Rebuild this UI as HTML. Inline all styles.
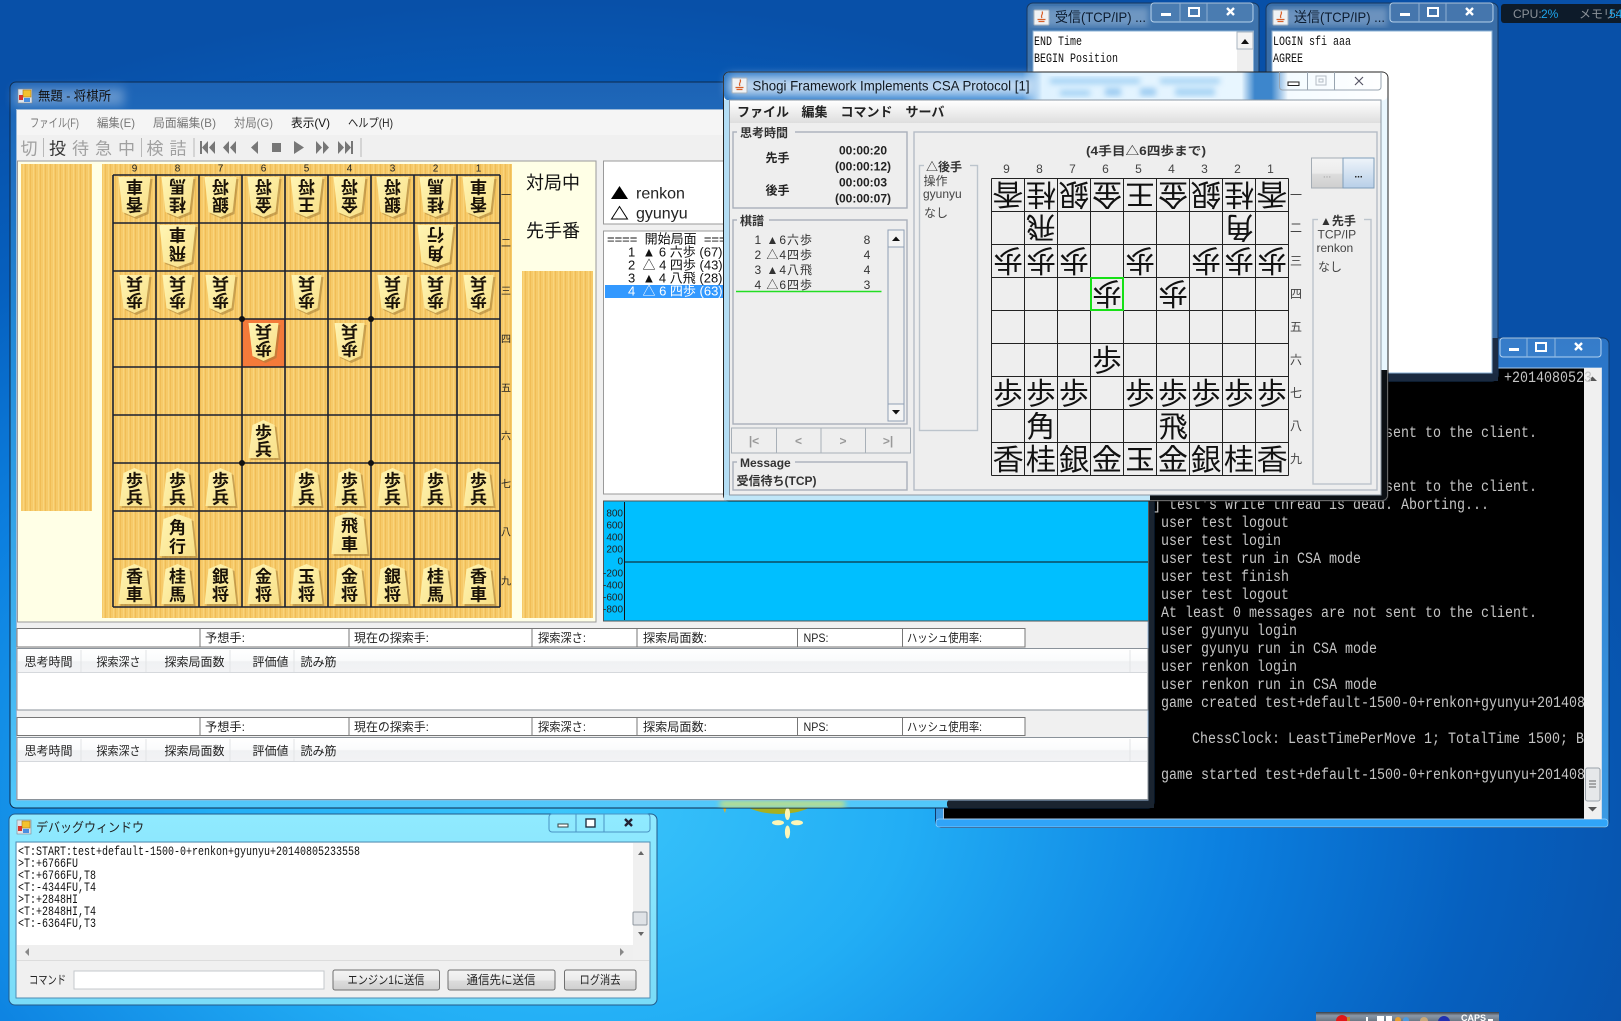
<!DOCTYPE html>
<html lang="ja"><head><meta charset="utf-8"><title>将棋所</title>
<style>
html,body{margin:0;padding:0;width:1621px;height:1021px;overflow:hidden;background:radial-gradient(ellipse 1150px 800px at 560px 800px,#3cc6fb 0%,#22aef5 30%,#0c80e0 58%,#0660bf 80%,#0850a8 100%)}
svg{position:absolute;left:0;top:0}
text{font-family:"Liberation Sans","Noto Sans CJK JP",sans-serif;font-size:12px;fill:#222;dominant-baseline:central;white-space:pre}
.k{font-family:"Noto Sans CJK JP",sans-serif;font-size:17px;font-weight:700;text-anchor:middle;fill:#1a1208}
.c{font-family:"IPAGothic","Noto Sans CJK JP",sans-serif;font-size:31px;text-anchor:middle;fill:#111}
.m{text-anchor:middle}
.con{font-family:"Liberation Mono",monospace;font-size:15.5px;fill:#c4c4c4}
.mono{font-family:"Liberation Mono",monospace;font-size:12.5px;fill:#111}
.g{fill:#666}
.tb{font-family:"Noto Sans CJK JP",sans-serif;font-size:17px;text-anchor:middle;fill:#a0a0a0}
.lb{font-size:10px;text-anchor:end;fill:#222}
.sep{stroke:#b4b8bc;stroke-width:1}
.win{stroke:#0d2a4c;stroke-width:1}
.ctl{fill:rgba(255,255,255,.06);stroke:rgba(220,240,255,.75);stroke-width:1}
.hd{fill:#888;stroke:#a8aeb8}
.fs{fill:none;stroke:#a9b0ba;stroke-width:1.4}
.leg{font-weight:700;font-size:12px;fill:#333}
</style></head><body>
<svg width="1621" height="1021" viewBox="0 0 1621 1021" xmlns="http://www.w3.org/2000/svg">
<defs>
<pattern id="wood" width="5" height="10" patternUnits="userSpaceOnUse"><rect width="5" height="10" fill="#f6ca69"/><rect x="0" width="1" height="10" fill="#f0bd57"/><rect x="3" width="1" height="10" fill="#f9d47c"/></pattern>
<linearGradient id="pf" x1="0" y1="0" x2="1" y2="1"><stop offset="0" stop-color="#fff5b4"/><stop offset="1" stop-color="#f8df86"/></linearGradient>
<linearGradient id="mainf" x1="0" y1="0" x2="0" y2="1"><stop offset="0" stop-color="#1d63b5"/><stop offset=".4" stop-color="#2490dc"/><stop offset="1" stop-color="#52c8fb"/></linearGradient>
<linearGradient id="dbg" x1="0" y1="0" x2="0" y2="1"><stop offset="0" stop-color="#90eaff"/><stop offset="1" stop-color="#7adcf8"/></linearGradient>
<linearGradient id="csat" x1="0" y1="0" x2="1" y2="0"><stop offset="0" stop-color="#1f70c4"/><stop offset=".45" stop-color="#2f83d4"/><stop offset=".48" stop-color="#dff2ff"/><stop offset=".78" stop-color="#e8f6ff"/><stop offset=".8" stop-color="#3d86cc"/><stop offset=".825" stop-color="#3d86cc"/><stop offset=".85" stop-color="#f4fbff"/><stop offset="1" stop-color="#fff"/></linearGradient>
<linearGradient id="hdr" x1="0" y1="0" x2="0" y2="1"><stop offset="0" stop-color="#fff"/><stop offset=".5" stop-color="#fafbfc"/><stop offset=".55" stop-color="#f0f1f3"/><stop offset="1" stop-color="#f2f3f5"/></linearGradient>
<linearGradient id="btn" x1="0" y1="0" x2="0" y2="1"><stop offset="0" stop-color="#f4f4f4"/><stop offset=".5" stop-color="#ebebeb"/><stop offset=".55" stop-color="#dcdcdc"/><stop offset="1" stop-color="#cfcfcf"/></linearGradient>
<linearGradient id="bluebtn" x1="0" y1="0" x2="0" y2="1"><stop offset="0" stop-color="#eef4fa"/><stop offset="1" stop-color="#b8cfe8"/></linearGradient>
<linearGradient id="menug" x1="0" y1="0" x2="0" y2="1"><stop offset="0" stop-color="#fff"/><stop offset="1" stop-color="#dedede"/></linearGradient>
<linearGradient id="task" x1="0" y1="0" x2="0" y2="1"><stop offset="0" stop-color="#3a4048"/><stop offset=".4" stop-color="#8a98a8"/><stop offset="1" stop-color="#6c7884"/></linearGradient>
<linearGradient id="cons" x1="0" y1="0" x2="0" y2="1"><stop offset="0" stop-color="#2a74c6"/><stop offset="1" stop-color="#3c9be4"/></linearGradient>
<filter id="bl"><feGaussianBlur stdDeviation="3"/></filter>
<filter id="bl2" x="-20%" y="-100%" width="140%" height="300%"><feGaussianBlur stdDeviation="5"/></filter>
<g id="sa"><path d="M2-17L13-12L17 21H-13L-9-12Z" fill="#a07c38" opacity=".55"/><path d="M0-19L11-14L15 19H-15L-11-14Z" fill="url(#pf)"/></g>
<g id="sb"><path d="M2-18L14-13L18 22H-14L-10-13Z" fill="#a07c38" opacity=".55"/><path d="M0-20L12-15L16 20H-16L-12-15Z" fill="url(#pf)"/></g>
<g id="sc"><path d="M2-19L16-14L20 23H-16L-12-14Z" fill="#a07c38" opacity=".55"/><path d="M0-21L14-16L18 21H-18L-14-16Z" fill="url(#pf)"/></g>
<g id="ga"><path d="M2 21L13 16L17-17H-13L-9 16Z" fill="#a07c38" opacity=".55"/><path d="M0 19L11 14L15-19H-15L-11 14Z" fill="url(#pf)"/></g>
<g id="gb"><path d="M2 22L14 17L18-18H-14L-10 17Z" fill="#a07c38" opacity=".55"/><path d="M0 20L12 15L16-20H-16L-12 15Z" fill="url(#pf)"/></g>
<g id="gc"><path d="M2 23L16 18L20-19H-16L-12 18Z" fill="#a07c38" opacity=".55"/><path d="M0 21L14 16L18-21H-18L-14 16Z" fill="url(#pf)"/></g>
<g id="java"><rect width="15" height="15" rx="1" fill="#f0f2f4" stroke="#aab4be"/><path d="M8 1.5C10 4 6 5 8 8M3.5 9.5H11.5M4.5 11.5H10.5" stroke="#d8602a" fill="none" stroke-width="1.2"/></g>
<g id="fico"><rect width="14" height="14" fill="#dfe4ea" stroke="#7b8792" stroke-width=".6"/><rect x="5" y="1" width="8" height="7" fill="#f4c22e" stroke="#a8781a" stroke-width=".6"/><rect x="1" y="6" width="4" height="5" fill="#d8342a"/><rect x="6" y="9" width="6" height="4" fill="#4a8ee0"/></g>
</defs>

<!-- wallpaper details -->
<ellipse cx="779" cy="795" rx="41" ry="19" fill="#a8b020"/>
<path d="M722 806h5l-2 7z" fill="#d8b030"/>
<ellipse cx="787.5" cy="814" rx="2.6" ry="6" fill="#fdf6b8"/><ellipse cx="787.5" cy="832" rx="2.6" ry="6.5" fill="#fdf6b8"/><ellipse cx="778" cy="822.7" rx="6" ry="2.6" fill="#fdf6b8"/><ellipse cx="797" cy="822.7" rx="6" ry="2.6" fill="#fdf6b8"/>

<!-- CPU widget -->
<rect x="1501" y="4" width="125" height="19" rx="3" fill="#0d1b2a"/>
<text x="1513" y="14" fill="#8b9198" style="fill:#8b9198">CPU:</text><text x="1541" y="14" style="fill:#1ea5ec">2%</text><text x="1579" y="14" style="fill:#8b9198">メモリ:</text><text x="1609" y="14" style="fill:#1ea5ec">54</text>

<!-- taskbar fragment -->
<rect x="1316" y="1012" width="183" height="9" fill="url(#task)"/>
<circle cx="1342" cy="1021" r="6" fill="#e01818"/><rect x="1347" y="1017" width="3" height="4" fill="#c08830"/>
<rect x="1366" y="1017" width="2" height="4" fill="#fff"/><rect x="1377" y="1016" width="7" height="5" fill="#fff"/><rect x="1386" y="1016" width="6" height="5" fill="#fff"/>
<circle cx="1398" cy="1020" r="3" fill="#e8a030"/><circle cx="1406" cy="1020" r="3" fill="#4a9ae0"/><circle cx="1424" cy="1021" r="4" fill="#c8a878"/><circle cx="1444" cy="1022" r="6" fill="#2030b0"/>
<text x="1461" y="1018" style="font-size:9px;fill:#fff;font-weight:700">CAPS</text><rect x="1488" y="1019" width="5" height="2" fill="#fff"/>

<!-- console window -->
<rect x="935.5" y="338" width="673.5" height="489.5" rx="6" fill="url(#cons)" stroke="#123a6a"/>
<rect x="936" y="819" width="672" height="8" rx="3" fill="#30a4f8" stroke="#8fd0ff" stroke-width=".8"/>
<rect x="943.5" y="368" width="658" height="451" fill="#000" stroke="#a8c8e8"/>
<rect x="1584" y="368" width="17.5" height="451" fill="#f0f0f0"/>
<path d="M1588 381h9l-4.5-4.5z" fill="#555"/><path d="M1588 807h9l-4.5 4.5z" fill="#555"/>
<rect x="1585.5" y="768" width="14.5" height="33" rx="2" fill="#e6e8ea" stroke="#9aa2aa"/><path d="M1589 781h7M1589 784h7M1589 787h7" stroke="#666"/>
<rect x="1500" y="338" width="101" height="19" rx="3" class="ctl"/><path d="M1527 338v19M1555 338v19" stroke="#8fb8e0"/>
<rect x="1509" y="348" width="10" height="3" fill="#fff"/><rect x="1536" y="343" width="10" height="8" fill="none" stroke="#fff" stroke-width="2"/><path d="M1575 343l7 7M1582 343l-7 7" stroke="#fff" stroke-width="2.4"/>
<g>
<text class="con" x="1504" y="378" textLength="88" lengthAdjust="spacingAndGlyphs">+2014080523</text>
<text class="con" x="1161" y="433" textLength="376" lengthAdjust="spacingAndGlyphs">At least 0 messages are not sent to the client.</text>
<text class="con" x="1161" y="487" textLength="376" lengthAdjust="spacingAndGlyphs">At least 0 messages are not sent to the client.</text>
<text class="con" x="1153" y="505" textLength="336" lengthAdjust="spacingAndGlyphs">] test's write thread is dead. Aborting...</text>
<text class="con" x="1161" y="523" textLength="128" lengthAdjust="spacingAndGlyphs">user test logout</text>
<text class="con" x="1161" y="541" textLength="120" lengthAdjust="spacingAndGlyphs">user test login</text>
<text class="con" x="1161" y="559" textLength="200" lengthAdjust="spacingAndGlyphs">user test run in CSA mode</text>
<text class="con" x="1161" y="577" textLength="128" lengthAdjust="spacingAndGlyphs">user test finish</text>
<text class="con" x="1161" y="595" textLength="128" lengthAdjust="spacingAndGlyphs">user test logout</text>
<text class="con" x="1161" y="613" textLength="376" lengthAdjust="spacingAndGlyphs">At least 0 messages are not sent to the client.</text>
<text class="con" x="1161" y="631" textLength="136" lengthAdjust="spacingAndGlyphs">user gyunyu login</text>
<text class="con" x="1161" y="649" textLength="216" lengthAdjust="spacingAndGlyphs">user gyunyu run in CSA mode</text>
<text class="con" x="1161" y="667" textLength="136" lengthAdjust="spacingAndGlyphs">user renkon login</text>
<text class="con" x="1161" y="685" textLength="216" lengthAdjust="spacingAndGlyphs">user renkon run in CSA mode</text>
<text class="con" x="1161" y="703" textLength="424" lengthAdjust="spacingAndGlyphs">game created test+default-1500-0+renkon+gyunyu+201408</text>
<text class="con" x="1192" y="739" textLength="392" lengthAdjust="spacingAndGlyphs">ChessClock: LeastTimePerMove 1; TotalTime 1500; B</text>
<text class="con" x="1161" y="775" textLength="424" lengthAdjust="spacingAndGlyphs">game started test+default-1500-0+renkon+gyunyu+201408</text>
</g>

<!-- recv window -->
<rect x="1027" y="3" width="232" height="100" rx="6" fill="#3f74ad" stroke="#17375e"/>
<rect x="1032" y="8" width="116" height="18" fill="#fff" opacity=".25" filter="url(#bl)"/>
<use href="#java" x="1034" y="10"/>
<text x="1055" y="17" style="font-size:14px;fill:#0c1c30" textLength="91" lengthAdjust="spacingAndGlyphs">受信(TCP/IP) ...</text>
<rect x="1151" y="3" width="102" height="19" rx="3" class="ctl"/><path d="M1180 3v19M1207 3v19" stroke="#8fb0d4"/>
<rect x="1161" y="13" width="10" height="3" fill="#fff"/><rect x="1189" y="8" width="10" height="8" fill="none" stroke="#fff" stroke-width="2"/><path d="M1227 8l7 7M1234 8l-7 7" stroke="#fff" stroke-width="2.4"/>
<rect x="1033" y="31" width="220.5" height="70" fill="#fff" stroke="#8ab0d4"/>
<rect x="1237" y="32" width="16" height="70" fill="#eee"/><rect x="1237" y="32" width="16" height="17" fill="#f4f4f4" stroke="#a8b4c0"/><path d="M1241 44h8l-4-5z" fill="#111"/>
<text class="mono" x="1034" y="42" textLength="48" lengthAdjust="spacingAndGlyphs">END Time</text><text class="mono" x="1034" y="59" textLength="84" lengthAdjust="spacingAndGlyphs">BEGIN Position</text>

<!-- send window -->
<rect x="1266" y="3" width="232" height="378" rx="6" fill="#3a6ea8" stroke="#17375e"/>
<rect x="1486" y="338" width="12" height="43" fill="#1c2c44"/><rect x="1266" y="373" width="232" height="8" rx="3" fill="#1a2a40"/>
<rect x="1271" y="8" width="116" height="18" fill="#fff" opacity=".25" filter="url(#bl)"/>
<use href="#java" x="1273" y="10"/>
<text x="1294" y="17" style="font-size:14px;fill:#0c1c30" textLength="91" lengthAdjust="spacingAndGlyphs">送信(TCP/IP) ...</text>
<rect x="1390" y="3" width="103" height="19" rx="3" class="ctl"/><path d="M1419 3v19M1446 3v19" stroke="#8fb0d4"/>
<rect x="1400" y="13" width="10" height="3" fill="#fff"/><rect x="1428" y="8" width="10" height="8" fill="none" stroke="#fff" stroke-width="2"/><path d="M1466 8l7 7M1473 8l-7 7" stroke="#fff" stroke-width="2.4"/>
<rect x="1272" y="31" width="220" height="342" fill="#fff" stroke="#8ab0d4"/>
<text class="mono" x="1273" y="42" textLength="78" lengthAdjust="spacingAndGlyphs">LOGIN sfi aaa</text><text class="mono" x="1273" y="59" textLength="30" lengthAdjust="spacingAndGlyphs">AGREE</text>

<!-- main window -->
<rect x="10" y="82" width="1144" height="726" rx="6" fill="url(#mainf)" stroke="#0d2a4c"/>
<rect x="1148" y="470" width="6" height="338" fill="#1a2430"/><rect x="947" y="800" width="207" height="8" rx="3" fill="#1a2430"/>
<rect x="720" y="801" width="125" height="6" fill="#e8e860" opacity=".85" filter="url(#bl)"/>
<rect x="14" y="88" width="110" height="18" fill="#fff" opacity=".3" filter="url(#bl2)"/>
<use href="#fico" x="18" y="89"/>
<text x="38" y="96" style="font-size:13px;fill:#101010" textLength="73" lengthAdjust="spacingAndGlyphs">無題 - 将棋所</text>
<rect x="16.5" y="109.5" width="1131.5" height="690.5" fill="#f0f0f0" stroke="#9ab8d8"/>
<rect x="17" y="110" width="1131" height="25" fill="#f5f5f5"/>
<g class="g">
<text x="30" y="123" style="fill:#777" textLength="49" lengthAdjust="spacingAndGlyphs">ファイル(F)</text><text x="97" y="123" style="fill:#777" textLength="38" lengthAdjust="spacingAndGlyphs">編集(E)</text><text x="153" y="123" style="fill:#777" textLength="63" lengthAdjust="spacingAndGlyphs">局面編集(B)</text><text x="234" y="123" style="fill:#777" textLength="39" lengthAdjust="spacingAndGlyphs">対局(G)</text><text x="291" y="123" style="fill:#111" textLength="39" lengthAdjust="spacingAndGlyphs">表示(V)</text><text x="348" y="123" style="fill:#222" textLength="45" lengthAdjust="spacingAndGlyphs">ヘルプ(H)</text>
</g>
<text class="tb" x="29" y="147">切</text><path d="M43.5 138v19M141.5 138v19M194 138v19M361 138v19" stroke="#b8b8b8"/>
<text class="tb" x="57.5" y="147" style="fill:#333">投</text><text class="tb" x="80.5" y="147">待</text><text class="tb" x="103.5" y="147">急</text><text class="tb" x="126.5" y="147">中</text><text class="tb" x="155" y="147">検</text><text class="tb" x="178" y="147">詰</text>
<g fill="#777"><rect x="200" y="141" width="2" height="13"/><path d="M208 141v13l-6-6.5zM215 141v13l-6-6.5z"/><path d="M229 141v13l-6-6.5zM236 141v13l-6-6.5z"/><path d="M258 141v13l-7-6.5z"/><rect x="272" y="143" width="9" height="9"/><path d="M294 141v13l10-6.5z"/><path d="M316 141v13l6-6.5zM323 141v13l6-6.5z"/><path d="M338 141v13l6-6.5zM345 141v13l6-6.5z"/><rect x="351" y="141" width="2" height="13"/></g>

<!-- board panel -->
<rect x="17.5" y="161" width="578.5" height="461" fill="#ffffe6" stroke="#9a9a9a"/>
<rect x="21" y="164" width="71" height="347" fill="url(#wood)"/>
<rect x="102" y="164" width="410" height="454" fill="url(#wood)"/>
<rect x="522" y="271" width="71" height="347" fill="url(#wood)"/>
<text x="526" y="183" style="font-size:18px;fill:#111">対局中</text><text x="526" y="231" style="font-size:18px;fill:#111">先手番</text>
<rect x="242.5" y="319" width="43" height="48" fill="#f47a3a"/>
<path d="M113 175V607M156 175V607M199 175V607M242 175V607M285 175V607M328 175V607M371 175V607M414 175V607M457 175V607M500 175V607M113 175H500M113 223H500M113 271H500M113 319H500M113 367H500M113 415H500M113 463H500M113 511H500M113 559H500M113 607H500" stroke="#1a2030" stroke-width="1.6" fill="none"/>
<circle cx="242" cy="319" r="3" fill="#111"/><circle cx="371" cy="319" r="3" fill="#111"/><circle cx="242" cy="463" r="3" fill="#111"/><circle cx="371" cy="463" r="3" fill="#111"/>
<g style="font-size:10px">
<text class="m" x="134.5" y="169" style="font-size:10px">9</text><text class="m" x="177.5" y="169" style="font-size:10px">8</text><text class="m" x="220.5" y="169" style="font-size:10px">7</text><text class="m" x="263.5" y="169" style="font-size:10px">6</text><text class="m" x="306.5" y="169" style="font-size:10px">5</text><text class="m" x="349.5" y="169" style="font-size:10px">4</text><text class="m" x="392.5" y="169" style="font-size:10px">3</text><text class="m" x="435.5" y="169" style="font-size:10px">2</text><text class="m" x="478.5" y="169" style="font-size:10px">1</text>
<text class="m" x="506" y="196" style="font-size:10px">一</text><text class="m" x="506" y="244" style="font-size:10px">二</text><text class="m" x="506" y="292" style="font-size:10px">三</text><text class="m" x="506" y="340" style="font-size:10px">四</text><text class="m" x="506" y="389" style="font-size:10px">五</text><text class="m" x="506" y="437" style="font-size:10px">六</text><text class="m" x="506" y="485" style="font-size:10px">七</text><text class="m" x="506" y="533" style="font-size:10px">八</text><text class="m" x="506" y="582" style="font-size:10px">九</text>
</g>
<!-- gote pieces -->
<g transform="translate(134.5,197)"><use href="#gb"/><g transform="rotate(180)"><text class="k" y="-9">香</text><text class="k" y="9">車</text></g></g>
<g transform="translate(177.5,197)"><use href="#gb"/><g transform="rotate(180)"><text class="k" y="-9">桂</text><text class="k" y="9">馬</text></g></g>
<g transform="translate(220.5,197)"><use href="#gb"/><g transform="rotate(180)"><text class="k" y="-9">銀</text><text class="k" y="9">将</text></g></g>
<g transform="translate(263.5,197)"><use href="#gb"/><g transform="rotate(180)"><text class="k" y="-9">金</text><text class="k" y="9">将</text></g></g>
<g transform="translate(306.5,197)"><use href="#gb"/><g transform="rotate(180)"><text class="k" y="-9">王</text><text class="k" y="9">将</text></g></g>
<g transform="translate(349.5,197)"><use href="#gb"/><g transform="rotate(180)"><text class="k" y="-9">金</text><text class="k" y="9">将</text></g></g>
<g transform="translate(392.5,197)"><use href="#gb"/><g transform="rotate(180)"><text class="k" y="-9">銀</text><text class="k" y="9">将</text></g></g>
<g transform="translate(435.5,197)"><use href="#gb"/><g transform="rotate(180)"><text class="k" y="-9">桂</text><text class="k" y="9">馬</text></g></g>
<g transform="translate(478.5,197)"><use href="#gb"/><g transform="rotate(180)"><text class="k" y="-9">香</text><text class="k" y="9">車</text></g></g>
<g transform="translate(177.5,246)"><use href="#gc"/><g transform="rotate(180)"><text class="k" y="-9">飛</text><text class="k" y="10">車</text></g></g>
<g transform="translate(435.5,246)"><use href="#gc"/><g transform="rotate(180)"><text class="k" y="-9">角</text><text class="k" y="10">行</text></g></g>
<g transform="translate(134.5,294)"><use href="#ga"/><g transform="rotate(180)"><text class="k" y="-8">歩</text><text class="k" y="9">兵</text></g></g>
<g transform="translate(177.5,294)"><use href="#ga"/><g transform="rotate(180)"><text class="k" y="-8">歩</text><text class="k" y="9">兵</text></g></g>
<g transform="translate(220.5,294)"><use href="#ga"/><g transform="rotate(180)"><text class="k" y="-8">歩</text><text class="k" y="9">兵</text></g></g>
<g transform="translate(306.5,294)"><use href="#ga"/><g transform="rotate(180)"><text class="k" y="-8">歩</text><text class="k" y="9">兵</text></g></g>
<g transform="translate(392.5,294)"><use href="#ga"/><g transform="rotate(180)"><text class="k" y="-8">歩</text><text class="k" y="9">兵</text></g></g>
<g transform="translate(435.5,294)"><use href="#ga"/><g transform="rotate(180)"><text class="k" y="-8">歩</text><text class="k" y="9">兵</text></g></g>
<g transform="translate(478.5,294)"><use href="#ga"/><g transform="rotate(180)"><text class="k" y="-8">歩</text><text class="k" y="9">兵</text></g></g>
<g transform="translate(263.5,342)"><use href="#ga"/><g transform="rotate(180)"><text class="k" y="-8">歩</text><text class="k" y="9">兵</text></g></g>
<g transform="translate(349.5,342)"><use href="#ga"/><g transform="rotate(180)"><text class="k" y="-8">歩</text><text class="k" y="9">兵</text></g></g>
<!-- sente pieces -->
<g transform="translate(263.5,439)"><use href="#sa"/><text class="k" y="-8">歩</text><text class="k" y="9">兵</text></g>
<g transform="translate(134.5,487)"><use href="#sa"/><text class="k" y="-8">歩</text><text class="k" y="9">兵</text></g>
<g transform="translate(177.5,487)"><use href="#sa"/><text class="k" y="-8">歩</text><text class="k" y="9">兵</text></g>
<g transform="translate(220.5,487)"><use href="#sa"/><text class="k" y="-8">歩</text><text class="k" y="9">兵</text></g>
<g transform="translate(306.5,487)"><use href="#sa"/><text class="k" y="-8">歩</text><text class="k" y="9">兵</text></g>
<g transform="translate(349.5,487)"><use href="#sa"/><text class="k" y="-8">歩</text><text class="k" y="9">兵</text></g>
<g transform="translate(392.5,487)"><use href="#sa"/><text class="k" y="-8">歩</text><text class="k" y="9">兵</text></g>
<g transform="translate(435.5,487)"><use href="#sa"/><text class="k" y="-8">歩</text><text class="k" y="9">兵</text></g>
<g transform="translate(478.5,487)"><use href="#sa"/><text class="k" y="-8">歩</text><text class="k" y="9">兵</text></g>
<g transform="translate(177.5,535)"><use href="#sc"/><text class="k" y="-9">角</text><text class="k" y="10">行</text></g>
<g transform="translate(349.5,533)"><use href="#sc"/><text class="k" y="-9">飛</text><text class="k" y="10">車</text></g>
<g transform="translate(134.5,584)"><use href="#sb"/><text class="k" y="-9">香</text><text class="k" y="9">車</text></g>
<g transform="translate(177.5,584)"><use href="#sb"/><text class="k" y="-9">桂</text><text class="k" y="9">馬</text></g>
<g transform="translate(220.5,584)"><use href="#sb"/><text class="k" y="-9">銀</text><text class="k" y="9">将</text></g>
<g transform="translate(263.5,584)"><use href="#sb"/><text class="k" y="-9">金</text><text class="k" y="9">将</text></g>
<g transform="translate(306.5,584)"><use href="#sb"/><text class="k" y="-9">玉</text><text class="k" y="9">将</text></g>
<g transform="translate(349.5,584)"><use href="#sb"/><text class="k" y="-9">金</text><text class="k" y="9">将</text></g>
<g transform="translate(392.5,584)"><use href="#sb"/><text class="k" y="-9">銀</text><text class="k" y="9">将</text></g>
<g transform="translate(435.5,584)"><use href="#sb"/><text class="k" y="-9">桂</text><text class="k" y="9">馬</text></g>
<g transform="translate(478.5,584)"><use href="#sb"/><text class="k" y="-9">香</text><text class="k" y="9">車</text></g>

<!-- names -->
<rect x="603.5" y="161" width="545" height="63" fill="#fff" stroke="#9a9a9a"/>
<path d="M611 199L619.5 186L628 199Z" fill="#000"/><path d="M611.5 219L619.5 206.5L627.5 219Z" fill="#fff" stroke="#000"/>
<text x="636" y="194" style="font-size:16px;fill:#222">renkon</text><text x="636" y="214" style="font-size:16px;fill:#222">gyunyu</text>
<!-- kifu list -->
<rect x="603.5" y="231" width="545" height="263" fill="#fff" stroke="#9a9a9a"/>
<rect x="605" y="285" width="120" height="13" fill="#3399ff"/>
<g style="font-size:13px">
<text x="607" y="239" style="font-size:13px;fill:#111">====  開始局面  ====</text>
<text x="628" y="252" style="font-size:13px;fill:#111">1  ▲ 6 六歩 (67)</text>
<text x="628" y="265" style="font-size:13px;fill:#111">2  △ 4 四歩 (43)</text>
<text x="628" y="278" style="font-size:13px;fill:#111">3  ▲ 4 八飛 (28)</text>
<text x="628" y="291" style="font-size:13px;fill:#fff">4  △ 6 四歩 (63)</text>
</g>
<!-- graph -->
<rect x="603.5" y="501" width="545" height="120" fill="#00bfff" stroke="#555"/>
<rect x="604" y="502" width="20.5" height="118" fill="#00bfff"/>
<path d="M624.5 502V620M624.5 562H1148" stroke="#111" stroke-width="1"/>
<text class="lb" x="623" y="514">800</text><text class="lb" x="623" y="526">600</text><text class="lb" x="623" y="538">400</text><text class="lb" x="623" y="550">200</text><text class="lb" x="623" y="562">0</text><text class="lb" x="623" y="574">-200</text><text class="lb" x="623" y="586">-400</text><text class="lb" x="623" y="598">-600</text><text class="lb" x="623" y="610">-800</text>

<!-- status 1 -->
<rect x="17" y="628.5" width="1008" height="18.5" fill="#fff" stroke="#777"/>
<path d="M200 628V647M349 628V647M532 628V647M637 628V647M797.5 628V647M902.5 628V647" stroke="#777"/>
<text x="205" y="638" textLength="40" lengthAdjust="spacingAndGlyphs">予想手:</text><text x="354" y="638" textLength="75" lengthAdjust="spacingAndGlyphs">現在の探索手:</text><text x="538" y="638" textLength="48" lengthAdjust="spacingAndGlyphs">探索深さ:</text><text x="643" y="638" textLength="64" lengthAdjust="spacingAndGlyphs">探索局面数:</text><text x="803.5" y="638" textLength="25" lengthAdjust="spacingAndGlyphs">NPS:</text><text x="907" y="638" textLength="75" lengthAdjust="spacingAndGlyphs">ハッシュ使用率:</text>
<rect x="17" y="648.5" width="1131" height="61.5" fill="#fff" stroke="#8a929a"/>
<rect x="18" y="649" width="1129" height="23" fill="url(#hdr)"/><path d="M18 672.5H1147" stroke="#d5d8dc"/><path d="M81 650V672M146 650V672M230 650V672M294 650V672M1130 650V672" stroke="#e2e4e6"/>
<text x="24.5" y="662" textLength="48" lengthAdjust="spacingAndGlyphs">思考時間</text><text x="96.5" y="662" textLength="44" lengthAdjust="spacingAndGlyphs">探索深さ</text><text x="164.5" y="662" textLength="60" lengthAdjust="spacingAndGlyphs">探索局面数</text><text x="252.5" y="662" textLength="36" lengthAdjust="spacingAndGlyphs">評価値</text><text x="300.5" y="662" textLength="36" lengthAdjust="spacingAndGlyphs">読み筋</text>
<!-- status 2 -->
<rect x="17" y="717.5" width="1008" height="18" fill="#fff" stroke="#777"/>
<path d="M200 717V735M349 717V735M532 717V735M637 717V735M797.5 717V735M902.5 717V735" stroke="#777"/>
<text x="205" y="727" textLength="40" lengthAdjust="spacingAndGlyphs">予想手:</text><text x="354" y="727" textLength="75" lengthAdjust="spacingAndGlyphs">現在の探索手:</text><text x="538" y="727" textLength="48" lengthAdjust="spacingAndGlyphs">探索深さ:</text><text x="643" y="727" textLength="64" lengthAdjust="spacingAndGlyphs">探索局面数:</text><text x="803.5" y="727" textLength="25" lengthAdjust="spacingAndGlyphs">NPS:</text><text x="907" y="727" textLength="75" lengthAdjust="spacingAndGlyphs">ハッシュ使用率:</text>
<rect x="17" y="737.5" width="1131" height="62" fill="#fff" stroke="#8a929a"/>
<rect x="18" y="738" width="1129" height="23" fill="url(#hdr)"/><path d="M18 761.5H1147" stroke="#d5d8dc"/><path d="M81 739V761M146 739V761M230 739V761M294 739V761M1130 739V761" stroke="#e2e4e6"/>
<text x="24.5" y="751" textLength="48" lengthAdjust="spacingAndGlyphs">思考時間</text><text x="96.5" y="751" textLength="44" lengthAdjust="spacingAndGlyphs">探索深さ</text><text x="164.5" y="751" textLength="60" lengthAdjust="spacingAndGlyphs">探索局面数</text><text x="252.5" y="751" textLength="36" lengthAdjust="spacingAndGlyphs">評価値</text><text x="300.5" y="751" textLength="36" lengthAdjust="spacingAndGlyphs">読み筋</text>

<!-- debug window -->
<rect x="9" y="814" width="648" height="191" rx="6" fill="url(#dbg)" stroke="#245a8a"/>
<rect x="549" y="814" width="101" height="18" rx="3" fill="none" stroke="#4a94c4"/><path d="M576 814v18M604 814v18" stroke="#4a94c4"/>
<rect x="558" y="824" width="10" height="3" fill="#fff" stroke="#344"/><rect x="586" y="819" width="9" height="8" fill="#fff" stroke="#234" stroke-width="1.4"/><path d="M625 819l7 7M632 819l-7 7" stroke="#223" stroke-width="2.4"/>
<use href="#fico" x="17" y="820"/>
<text x="36" y="827.5" style="font-size:13px;fill:#222" textLength="108" lengthAdjust="spacingAndGlyphs">デバッグウィンドウ</text>
<rect x="16" y="842" width="634" height="156" fill="#f0f0f0" stroke="#4d8cb4"/>
<rect x="17" y="843" width="616" height="102" fill="#fff"/>
<rect x="633" y="843" width="16" height="102" fill="#f0f0f0"/><rect x="17" y="945" width="616" height="15" fill="#efefef"/><path d="M17 960.5H649" stroke="#dcdcdc"/>
<path d="M638 855h6l-3-4zM638 932h6l-3 4z" fill="#666"/>
<path d="M29 948v8l-4-4zM620 948v8l4-4z" fill="#888"/>
<rect x="633" y="912" width="14" height="13" rx="1" fill="#dfe2e6" stroke="#8f979f"/>
<text class="mono" x="18" y="852" textLength="342" lengthAdjust="spacingAndGlyphs">&lt;T:START:test+default-1500-0+renkon+gyunyu+20140805233558</text>
<text class="mono" x="18" y="864" textLength="60" lengthAdjust="spacingAndGlyphs">&gt;T:+6766FU</text>
<text class="mono" x="18" y="876" textLength="78" lengthAdjust="spacingAndGlyphs">&lt;T:+6766FU,T8</text>
<text class="mono" x="18" y="888" textLength="78" lengthAdjust="spacingAndGlyphs">&lt;T:-4344FU,T4</text>
<text class="mono" x="18" y="900" textLength="60" lengthAdjust="spacingAndGlyphs">&gt;T:+2848HI</text>
<text class="mono" x="18" y="912" textLength="78" lengthAdjust="spacingAndGlyphs">&lt;T:+2848HI,T4</text>
<text class="mono" x="18" y="924" textLength="78" lengthAdjust="spacingAndGlyphs">&lt;T:-6364FU,T3</text>
<text x="29" y="980" textLength="37" lengthAdjust="spacingAndGlyphs">コマンド</text>
<rect x="74" y="971" width="250" height="18" fill="#fff" stroke="#c4c8cc"/>
<rect x="333" y="970" width="106.5" height="20" rx="2" fill="url(#btn)" stroke="#707070"/><text class="m" x="386" y="980" textLength="77" lengthAdjust="spacingAndGlyphs">エンジン1に送信</text>
<rect x="448" y="970" width="107" height="20" rx="2" fill="url(#btn)" stroke="#707070"/><text class="m" x="501" y="980" textLength="69" lengthAdjust="spacingAndGlyphs">通信先に送信</text>
<rect x="564.5" y="970" width="71.5" height="20" rx="2" fill="url(#btn)" stroke="#707070"/><text class="m" x="600" y="980" textLength="41" lengthAdjust="spacingAndGlyphs">ログ消去</text>

<!-- CSA window -->
<rect x="723.5" y="72" width="664.5" height="429" rx="6" fill="#e9f6fd" stroke="#222"/>
<rect x="724" y="72.5" width="663.5" height="28" rx="5" fill="url(#csat)"/>
<rect x="728" y="76" width="306" height="20" fill="#fff" opacity=".7" filter="url(#bl2)"/>
<g filter="url(#bl)" opacity=".5"><rect x="1050" y="78" width="90" height="6" fill="#6cb4ea"/><rect x="1160" y="78" width="60" height="6" fill="#6cb4ea"/><rect x="1060" y="90" width="30" height="6" fill="#6cb4ea"/><rect x="1105" y="88" width="16" height="8" fill="#5aa6e4"/><rect x="1140" y="88" width="16" height="8" fill="#5aa6e4"/><rect x="1175" y="88" width="40" height="8" fill="#6cb4ea"/></g>
<rect x="1381" y="370" width="6.5" height="131" fill="#0c1014"/><rect x="1150" y="495" width="237.5" height="5.5" fill="#0c1014"/>
<path d="M1387.5 370V495a5 5 0 0 1-5 5.5H1150" fill="none" stroke="#666"/>
<rect x="724" y="100" width="6" height="395" fill="#b4def5"/>
<rect x="724" y="495" width="426" height="5.5" fill="#bfe6f8"/>
<use href="#java" x="732" y="78"/>
<text x="752.5" y="85.5" style="font-size:14px;fill:#101820" textLength="277" lengthAdjust="spacingAndGlyphs">Shogi Framework Implements CSA Protocol [1]</text>
<path d="M1279.5 72v15a3 3 0 0 0 3 3H1378a3 3 0 0 0 3-3V72M1307.5 72v18M1334.5 72v18" fill="none" stroke="#98a4b0"/>
<rect x="1288" y="82" width="11" height="3.5" fill="#fff" stroke="#222"/><rect x="1316" y="76" width="10" height="9" fill="none" stroke="#b4bcc4"/><rect x="1319" y="79" width="4" height="3" fill="none" stroke="#b4bcc4"/>
<path d="M1355 77l8 8M1363 77l-8 8" stroke="#fff" stroke-width="3.4"/><path d="M1355 77l8 8M1363 77l-8 8" stroke="#556" stroke-width="1.2"/>
<rect x="729.5" y="100" width="651.5" height="395" fill="#eeeeee" stroke="#8c98a4"/>
<rect x="730" y="100.5" width="650.5" height="22.5" fill="url(#menug)"/>
<text x="737" y="112" style="font-size:13px;font-weight:700;fill:#222">ファイル</text><text x="801.5" y="112" style="font-size:13px;font-weight:700;fill:#222">編集</text><text x="840.5" y="112" style="font-size:13px;font-weight:700;fill:#222">コマンド</text><text x="905.5" y="112" style="font-size:13px;font-weight:700;fill:#222">サーバ</text>
<!-- thinking time -->
<rect x="733" y="132" width="174" height="76" class="fs"/><rect x="737" y="126" width="58" height="14" fill="#eee"/>
<text class="leg" x="740" y="133">思考時間</text>
<text x="765.5" y="158" style="font-weight:700">先手</text><text x="765.5" y="190.5" style="font-weight:700">後手</text>
<text class="m" x="863" y="150.5" style="font-weight:700">00:00:20</text><text class="m" x="863" y="166.5" style="font-weight:700">(00:00:12)</text><text class="m" x="863" y="182.5" style="font-weight:700">00:00:03</text><text class="m" x="863" y="198.5" style="font-weight:700">(00:00:07)</text>
<!-- kifu -->
<rect x="733" y="220" width="174" height="204" class="fs"/><rect x="737" y="214" width="32" height="14" fill="#eee"/>
<text class="leg" x="740" y="221">棋譜</text>
<text x="754.5" y="240" style="fill:#333" textLength="57.5" lengthAdjust="spacing">1 ▲6六歩</text><text x="867" y="240" style="fill:#333" class="m">8</text>
<text x="754.5" y="255" style="fill:#333" textLength="57.5" lengthAdjust="spacing">2 △4四歩</text><text x="867" y="255" style="fill:#333" class="m">4</text>
<text x="754.5" y="270" style="fill:#333" textLength="57.5" lengthAdjust="spacing">3 ▲4八飛</text><text x="867" y="270" style="fill:#333" class="m">4</text>
<text x="754.5" y="285" style="fill:#333" textLength="57.5" lengthAdjust="spacing">4 △6四歩</text><text x="867" y="285" style="fill:#333" class="m">3</text>
<path d="M736 291.5H881.5" stroke="#22dd22" stroke-width="1.4"/>
<rect x="888" y="230" width="16" height="191" fill="#eee" stroke="#8f9fb4"/><rect x="888" y="230" width="16" height="17" fill="#f4f4f4" stroke="#8f9fb4"/><rect x="888" y="404" width="16" height="17" fill="#f4f4f4" stroke="#8f9fb4"/>
<path d="M892 241h8l-4-4.5z" fill="#111"/><path d="M892 410h8l-4 4.5z" fill="#111"/>
<!-- nav -->
<rect x="731.5" y="428" width="179" height="25" fill="#eee" stroke="#a8b0b8"/><path d="M776.5 428v25M821 428v25M865.5 428v25" stroke="#a8b0b8"/>
<text class="m" x="754" y="441" style="fill:#999;font-weight:700">|&lt;</text><text class="m" x="798.5" y="441" style="fill:#999;font-weight:700">&lt;</text><text class="m" x="843" y="441" style="fill:#999;font-weight:700">&gt;</text><text class="m" x="888" y="441" style="fill:#999;font-weight:700">&gt;|</text>
<!-- message -->
<rect x="733" y="462" width="174" height="28" class="fs"/><rect x="737" y="456" width="58" height="14" fill="#eee"/>
<text class="leg" x="740" y="463">Message</text>
<text x="736.5" y="481" style="font-weight:700;fill:#333">受信待ち(TCP)</text>
<!-- right panel -->
<rect x="914" y="132" width="463" height="358" fill="#eee" stroke="#b4bcc6" stroke-width="1.4"/>
<text class="m" x="1146" y="151" style="font-weight:700;fill:#333" textLength="120" lengthAdjust="spacingAndGlyphs">(4手目△6四歩まで)</text>
<rect x="919.5" y="165.5" width="58" height="265" class="fs" style="stroke:#bcc4cc"/><rect x="924" y="160" width="46" height="14" fill="#eee"/>
<text class="leg" x="926" y="167">△後手</text>
<text x="923.5" y="181" style="fill:#444">操作</text><text x="923" y="194" style="fill:#444">gyunyu</text><text x="924" y="213" style="fill:#444">なし</text>
<rect x="1313" y="219.5" width="58" height="264.5" class="fs" style="stroke:#bcc4cc"/><rect x="1318" y="214" width="46" height="14" fill="#eee"/>
<text class="leg" x="1320" y="221">▲先手</text>
<text x="1317.5" y="234.5" style="fill:#444">TCP/IP</text><text x="1316.5" y="248" style="fill:#444">renkon</text><text x="1318" y="267" style="fill:#444">なし</text>
<rect x="1311.5" y="158" width="31.5" height="30" fill="url(#btn)" stroke="#a4acb4"/><rect x="1343" y="158" width="31" height="30" fill="url(#bluebtn)" stroke="#7f9db9"/>
<text class="m" x="1327" y="175" style="fill:#999;font-size:10px">...</text><text class="m" x="1358.5" y="175" style="font-size:10px;font-weight:700">...</text>
<!-- csa board -->
<rect x="991.5" y="178.5" width="297" height="297" fill="#eee"/>
<path d="M991.5 178.5V475.5M1024.5 178.5V475.5M1057.5 178.5V475.5M1090.5 178.5V475.5M1123.5 178.5V475.5M1156.5 178.5V475.5M1189.5 178.5V475.5M1222.5 178.5V475.5M1255.5 178.5V475.5M1288.5 178.5V475.5M991.5 178.5H1288.5M991.5 211.5H1288.5M991.5 244.5H1288.5M991.5 277.5H1288.5M991.5 310.5H1288.5M991.5 343.5H1288.5M991.5 376.5H1288.5M991.5 409.5H1288.5M991.5 442.5H1288.5M991.5 475.5H1288.5" stroke="#222" stroke-width="1" fill="none"/>
<rect x="1091" y="278" width="32" height="32" fill="none" stroke="#16e016" stroke-width="2"/>
<text class="m" x="1006.5" y="169" style="fill:#444">9</text><text class="m" x="1039.5" y="169" style="fill:#444">8</text><text class="m" x="1072.5" y="169" style="fill:#444">7</text><text class="m" x="1105.5" y="169" style="fill:#444">6</text><text class="m" x="1138.5" y="169" style="fill:#444">5</text><text class="m" x="1171.5" y="169" style="fill:#444">4</text><text class="m" x="1204.5" y="169" style="fill:#444">3</text><text class="m" x="1237.5" y="169" style="fill:#444">2</text><text class="m" x="1270.5" y="169" style="fill:#444">1</text>
<text class="m" x="1296" y="195" style="fill:#444">一</text><text class="m" x="1296" y="228" style="fill:#444">二</text><text class="m" x="1296" y="261" style="fill:#444">三</text><text class="m" x="1296" y="294" style="fill:#444">四</text><text class="m" x="1296" y="327" style="fill:#444">五</text><text class="m" x="1296" y="360" style="fill:#444">六</text><text class="m" x="1296" y="393" style="fill:#444">七</text><text class="m" x="1296" y="426" style="fill:#444">八</text><text class="m" x="1296" y="459" style="fill:#444">九</text>
<g transform="translate(1008,195) rotate(180)"><text class="c">香</text></g><g transform="translate(1041,195) rotate(180)"><text class="c">桂</text></g><g transform="translate(1074,195) rotate(180)"><text class="c">銀</text></g><g transform="translate(1107,195) rotate(180)"><text class="c">金</text></g><g transform="translate(1140,195) rotate(180)"><text class="c">王</text></g><g transform="translate(1173,195) rotate(180)"><text class="c">金</text></g><g transform="translate(1206,195) rotate(180)"><text class="c">銀</text></g><g transform="translate(1239,195) rotate(180)"><text class="c">桂</text></g><g transform="translate(1272,195) rotate(180)"><text class="c">香</text></g>
<g transform="translate(1041,228) rotate(180)"><text class="c">飛</text></g><g transform="translate(1239,228) rotate(180)"><text class="c">角</text></g>
<g transform="translate(1008,261) rotate(180)"><text class="c">歩</text></g><g transform="translate(1041,261) rotate(180)"><text class="c">歩</text></g><g transform="translate(1074,261) rotate(180)"><text class="c">歩</text></g><g transform="translate(1140,261) rotate(180)"><text class="c">歩</text></g><g transform="translate(1206,261) rotate(180)"><text class="c">歩</text></g><g transform="translate(1239,261) rotate(180)"><text class="c">歩</text></g><g transform="translate(1272,261) rotate(180)"><text class="c">歩</text></g>
<g transform="translate(1107,294) rotate(180)"><text class="c">歩</text></g><g transform="translate(1173,294) rotate(180)"><text class="c">歩</text></g>
<text class="c" x="1107" y="360">歩</text>
<text class="c" x="1008" y="393">歩</text><text class="c" x="1041" y="393">歩</text><text class="c" x="1074" y="393">歩</text><text class="c" x="1140" y="393">歩</text><text class="c" x="1173" y="393">歩</text><text class="c" x="1206" y="393">歩</text><text class="c" x="1239" y="393">歩</text><text class="c" x="1272" y="393">歩</text>
<text class="c" x="1041" y="426">角</text><text class="c" x="1173" y="426">飛</text>
<text class="c" x="1008" y="459">香</text><text class="c" x="1041" y="459">桂</text><text class="c" x="1074" y="459">銀</text><text class="c" x="1107" y="459">金</text><text class="c" x="1140" y="459">玉</text><text class="c" x="1173" y="459">金</text><text class="c" x="1206" y="459">銀</text><text class="c" x="1239" y="459">桂</text><text class="c" x="1272" y="459">香</text>
</svg>
</body></html>
